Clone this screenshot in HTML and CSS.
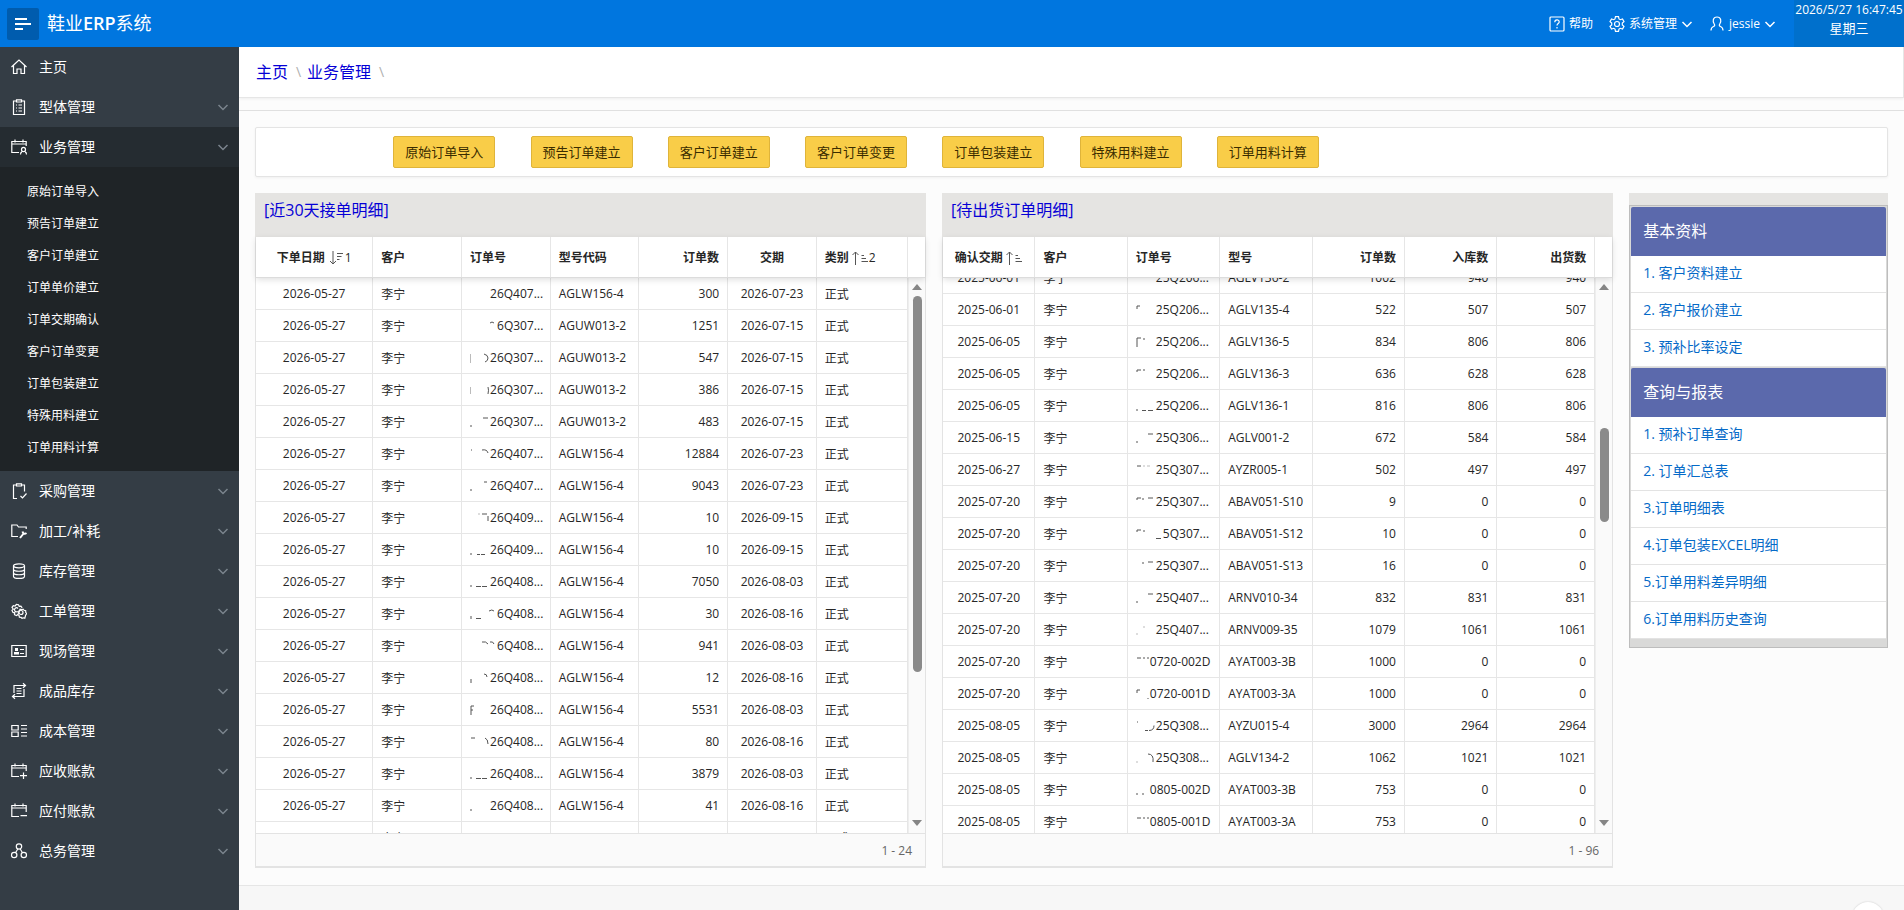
FILE: index.html
```html
<!DOCTYPE html>
<html lang="zh-CN">
<head>
<meta charset="utf-8">
<title>鞋业ERP系统</title>
<link rel="stylesheet" href="styles.css">
</head>
<body>
<svg class="defs" aria-hidden="true">
  <symbol id="chev" viewBox="0 0 12 12"><path d="M1.500 4l4.500 4.500L10.500 4"/></symbol>
  <symbol id="gear" viewBox="0 0 16 16"><circle cx="8" cy="8" r="2.500"/><path d="M6.500 .7h3l.5 2.200 1.300.8 2.200-.7 1.500 2.600-1.700 1.500v1.800l1.700 1.500-1.500 2.600-2.200-.7-1.300.8-.5 2.200h-3L6 13.100l-1.300-.8-2.200.7L1 10.400l1.700-1.500V7.100L1 5.600 2.500 3l2.200.7L6 2.900z"/></symbol>
  <symbol id="cogs" viewBox="0 0 16 16"><circle cx="10" cy="9.500" r="2"/><path d="M13.800 15.200l-1.600-.4-1.200.6-.9-1-1.700-.2-.3-1.600-1.200-1 .6-1.500-.5-1.600 1.300-.8.8-1.400 1.500.4 1.500-.6 1 1.200 1.600.5v1.600l1 1.200-1 1.300z"/><path d="M7 11.500l-1.500 1-2-.8.200-1.900-1.700-.4-1-2 1.300-1.300L1 4.300l1.300-1.600 1.800.3 1.200-1.500 2.200.2.700 1.600 1.700-.2 1.300 1.700"/><path d="M6.500 8.500a2 2 0 1 1 .5-3"/></symbol>
  <symbol id="desc" viewBox="0 0 14 16"><path d="M3.500 1v13M.5 11l3 3 3-3M7.500 3.500h6M7.500 6.500h4.500M7.500 9.500h2.500"/></symbol>
  <symbol id="asc" viewBox="0 0 17 16"><path d="M3.500 15V2M.5 5l3-3 3 3M9.500 5.500h2.500M9.500 8.500h4.500M9.500 11.500h6.500"/></symbol>
</svg>
<header class="topbar">
  <button class="burger" aria-label="导航"><svg width="16" height="14"><path d="M0 2h12M0 7h16M0 12h8"/></svg></button>
  <a class="brand" href="#">鞋业<b>ERP</b>系统</a>
  <nav class="tools">
    <a href="#"><svg class="ic" viewBox="0 0 16 16"><rect x="1" y="1" width="14" height="14" rx="1"/><path d="M5.800 6.200c0-3 4.400-3 4.400-.3C10.200 7.600 8 7.600 8 9.600M8 11v1.500"/></svg>帮助</a>
    <button><svg class="ic"><use href="#gear"/></svg>系统管理<svg class="chev"><use href="#chev"/></svg></button>
    <button><svg class="ic" viewBox="0 0 16 16"><path d="M8 1C3.500 1 3.800 5.500 5 7.500c1 1.700 1 2.500-.5 3C2.500 11.200 2 12 2 14.500M8 1c4.500 0 4.200 4.500 3 6.500-1 1.700-1 2.500.5 3 2 .7 2.500 1.500 2.500 4"/></svg>jessie<svg class="chev"><use href="#chev"/></svg></button>
  </nav>
  <div class="clock"><div>2026/5/27 16:47:45</div><div class="day">星期三</div></div>
</header>
<div class="shell">
<nav class="side">
  <a class="item" href="#"><svg class="ic" viewBox="0 0 16 16"><path d="M.5 8L8 1l7.500 7M2.500 6.500v8h3.500V10h4v4.500h3.500v-8"/></svg><span>主页</span></a>
  <a class="item" href="#"><svg class="ic" viewBox="0 0 16 16"><path d="M5.500 2H2.500v13.500h11V2h-3M5.500 .8h5V3h-5zM5 6h1M7.500 6H11M5 9h1M7.500 9H11M5 12h1M7.500 12H11"/></svg><span>型体管理</span><svg class="chev"><use href="#chev"/></svg></a>
  <a class="item current" href="#"><svg class="ic" viewBox="0 0 16 16"><path d="M8 13.500H.8v-11h14.400V7M.8 5h14.400M4 .5v3M12 .5v3M9.500 15.500c0-2 .8-2.500 1.500-2.700M14 12.800c1 .2 1.500 1 1.500 2.700M14.500 10.500a2 2.200 0 1 1-4 0 2 2.200 0 0 1 4 0"/></svg><span>业务管理</span><svg class="chev"><use href="#chev"/></svg></a>
  <div class="sub">
    <a href="#">原始订单导入</a><a href="#">预告订单建立</a><a href="#">客户订单建立</a><a href="#">订单单价建立</a><a href="#">订单交期确认</a><a href="#">客户订单变更</a><a href="#">订单包装建立</a><a href="#">特殊用料建立</a><a href="#">订单用料计算</a>
  </div>
  <a class="item" href="#"><svg class="ic" viewBox="0 0 16 16"><path d="M6 15.500H2.500V2h3M10.500 2h3v6.500M5.500 .8h5V3h-5zM9.500 13l2 2 4-4.500"/></svg><span>采购管理</span><svg class="chev"><use href="#chev"/></svg></a>
  <a class="item" href="#"><svg class="ic" viewBox="0 0 16 16"><path d="M7 13.500H.8V2H6l1.500 2h7.700v2"/><path class="thick" d="M9 15l4-5M11.500 8.500c.5 2 2 3 4 1.500"/></svg><span>加工/补耗</span><svg class="chev"><use href="#chev"/></svg></a>
  <a class="item" href="#"><svg class="ic" viewBox="0 0 16 16"><ellipse cx="8" cy="2.800" rx="5.500" ry="2"/><path d="M2.500 2.800v10.400c0 3 11 3 11 0V2.800M2.500 6.300c0 2.600 11 2.600 11 0M2.500 9.800c0 2.600 11 2.600 11 0"/></svg><span>库存管理</span><svg class="chev"><use href="#chev"/></svg></a>
  <a class="item" href="#"><svg class="ic"><use href="#cogs"/></svg><span>工单管理</span><svg class="chev"><use href="#chev"/></svg></a>
  <a class="item" href="#"><svg class="ic" viewBox="0 0 16 16"><path d="M.8 2.500h14.400v11H.8zM9 6.500h4M9 10.500h4"/><path class="fill" d="M4 5h3v3H4zM3 9h5v2.500H3z"/></svg><span>现场管理</span><svg class="chev"><use href="#chev"/></svg></a>
  <a class="item" href="#"><svg class="ic" viewBox="0 0 16 16"><path d="M3 10V2.500h11.500M12 .3l2.500 2.200L12 4.700M13 6v7.500H1.500M4 11.300l-2.500 2.200L4 15.700M5.500 5.500h5M5.500 8h5M5.500 10.500h5"/></svg><span>成品库存</span><svg class="chev"><use href="#chev"/></svg></a>
  <a class="item" href="#"><svg class="ic" viewBox="0 0 16 16"><path d="M.8 2.500h6.400v4.500H.8zM.8 9h6.400v4.500H.8zM10 2.500h6M10 6h6M10 9.500h6M10 13h6"/></svg><span>成本管理</span><svg class="chev"><use href="#chev"/></svg></a>
  <a class="item" href="#"><svg class="ic" viewBox="0 0 16 16"><path d="M8 13.500H.8v-11h14.400V8M.8 5h14.400M4 .5v3M12 .5v3M12.500 9.500v6.500M9 12.700h7"/></svg><span>应收账款</span><svg class="chev"><use href="#chev"/></svg></a>
  <a class="item" href="#"><svg class="ic" viewBox="0 0 16 16"><path d="M8 13.500H.8v-11h14.400V9M.8 5h14.400M4 .5v3M12 .5v3M9.500 12.700H16"/></svg><span>应付账款</span><svg class="chev"><use href="#chev"/></svg></a>
  <a class="item" href="#"><svg class="ic" viewBox="0 0 16 16"><circle cx="8" cy="3.500" r="2.700"/><circle cx="3.200" cy="12" r="2.700"/><circle cx="12.800" cy="12" r="2.700"/><path d="M6.800 6L4.500 9.700M9.200 6l2.300 3.700"/></svg><span>总务管理</span><svg class="chev"><use href="#chev"/></svg></a>
</nav>
<main>
  <div class="crumbs"><a href="#">主页</a><i>\</i><a href="#">业务管理</a><i>\</i></div>
  <div class="content">
    <section class="actions grid">
      <button>原始订单导入</button><button>预告订单建立</button><button>客户订单建立</button><button>客户订单变更</button><button>订单包装建立</button><button>特殊用料建立</button><button>订单用料计算</button>
    </section>
    <div class="grid">
    <section class="panel">
      <h2><a href="#">[近30天接单明细]</a></h2>
      <div class="head">
      <table class="t1"><colgroup><col class="w1"><col><col><col><col><col><col class="w7"></colgroup>
        <thead><tr><th class="c">下单日期<svg class="sort"><use href="#desc"/></svg><span>1</span></th><th>客户</th><th>订单号</th><th>型号代码</th><th class="r">订单数</th><th class="c">交期</th><th>类别<svg class="sort"><use href="#asc"/></svg><span>2</span></th></tr></thead>
      </table></div>
      <div class="view">
      <div class="rows"><table class="t1"><colgroup><col class="w1"><col><col><col><col><col><col class="w7"></colgroup>
        <tbody>
        <tr><td>2026-05-27<td>李宁<td><svg class="mk"></svg>26Q407...<td>AGLW156-4<td>300<td>2026-07-23<td>正式</tr>
        <tr><td>2026-05-27<td>李宁<td><svg class="mk wide"><path d="M20 3q2-2 4 0"/></svg>6Q307...<td>AGUW013-2<td>1251<td>2026-07-15<td>正式</tr>
        <tr><td>2026-05-27<td>李宁<td><svg class="mk"><path class="lt" d="M.5 2v9"/><path d="M14 2q4 1 4 4t-3 4"/></svg>26Q307...<td>AGUW013-2<td>547<td>2026-07-15<td>正式</tr>
        <tr><td>2026-05-27<td>李宁<td><svg class="mk"><path class="lt" d="M.5 3v7"/><path d="M18 3q1 3 0 7"/></svg>26Q307...<td>AGUW013-2<td>386<td>2026-07-15<td>正式</tr>
        <tr><td>2026-05-27<td>李宁<td><svg class="mk"><path d="M1 9v2M13 2h5"/></svg>26Q307...<td>AGUW013-2<td>483<td>2026-07-15<td>正式</tr>
        <tr><td>2026-05-27<td>李宁<td><svg class="mk"><path d="M1 2h1M12 2q5-1 6 3"/></svg>26Q407...<td>AGLW156-4<td>12884<td>2026-07-23<td>正式</tr>
        <tr><td>2026-05-27<td>李宁<td><svg class="mk"><path d="M1 9v2M14 2h3"/></svg>26Q407...<td>AGLW156-4<td>9043<td>2026-07-23<td>正式</tr>
        <tr><td>2026-05-27<td>李宁<td><svg class="mk"><path class="lt" d="M8 2h2"/><path d="M12 2h5M18 4v5"/></svg>26Q409...<td>AGLW156-4<td>10<td>2026-09-15<td>正式</tr>
        <tr><td>2026-05-27<td>李宁<td><svg class="mk"><path d="M1 9v2M7 10.500h3M11 10.500h4"/></svg>26Q409...<td>AGLW156-4<td>10<td>2026-09-15<td>正式</tr>
        <tr><td>2026-05-27<td>李宁<td><svg class="mk"><path d="M1 9v2M6 10.500h5M12 10.500h5"/></svg>26Q408...<td>AGLW156-4<td>7050<td>2026-08-03<td>正式</tr>
        <tr><td>2026-05-27<td>李宁<td><svg class="mk wide"><path d="M1 8v3M6 10.500h5M19 3q3-2 5 0"/></svg>6Q408...<td>AGLW156-4<td>30<td>2026-08-16<td>正式</tr>
        <tr><td>2026-05-27<td>李宁<td><svg class="mk wide"><path d="M12 2q4-1 6 2M20 2q3-1 4 2"/></svg>6Q408...<td>AGLW156-4<td>941<td>2026-08-03<td>正式</tr>
        <tr><td>2026-05-27<td>李宁<td><svg class="mk"><path d="M1 7v4M14 2q3 0 3 3"/></svg>26Q408...<td>AGLW156-4<td>12<td>2026-08-16<td>正式</tr>
        <tr><td>2026-05-27<td>李宁<td><svg class="mk"><path d="M1 11V2h3M1 6h2"/></svg>26Q408...<td>AGLW156-4<td>5531<td>2026-08-03<td>正式</tr>
        <tr><td>2026-05-27<td>李宁<td><svg class="mk"><path d="M1 2h4M15 2q3 1 3 6"/></svg>26Q408...<td>AGLW156-4<td>80<td>2026-08-16<td>正式</tr>
        <tr><td>2026-05-27<td>李宁<td><svg class="mk"><path d="M1 9v2M6 10.500h5M12 10.500h5"/></svg>26Q408...<td>AGLW156-4<td>3879<td>2026-08-03<td>正式</tr>
        <tr><td>2026-05-27<td>李宁<td><svg class="mk"><path d="M1 9v2"/></svg>26Q408...<td>AGLW156-4<td>41<td>2026-08-16<td>正式</tr>
        <tr><td>2026-05-27<td>李宁<td><svg class="mk"></svg>26Q408...<td>AGLW156-4<td>30<td>2026-08-03<td>正式</tr>
        </tbody>
      </table></div>
      <div class="bar"><b class="up"></b><div class="track"><span class="thumb first"></span></div><b class="down"></b></div>
      </div>
      <footer>1 - 24</footer>
    </section>
    <section class="panel">
      <h2><a href="#">[待出货订单明细]</a></h2>
      <div class="head">
      <table class="t2"><colgroup><col><col><col><col><col><col><col class="w7"></colgroup>
        <thead><tr><th class="c">确认交期<svg class="sort"><use href="#asc"/></svg></th><th>客户</th><th>订单号</th><th>型号</th><th class="r">订单数</th><th class="r">入库数</th><th class="r">出货数</th></tr></thead>
      </table></div>
      <div class="view">
      <div class="rows"><table class="t2 scrolled"><colgroup><col><col><col><col><col><col><col class="w7"></colgroup>
        <tbody>
        <tr><td>2025-06-01<td>李宁<td><svg class="mk"></svg>25Q206...<td>AGLV136-2<td>1002<td>940<td>940</tr>
        <tr><td>2025-06-01<td>李宁<td><svg class="mk"><path d="M1 5V2h3"/></svg>25Q206...<td>AGLV135-4<td>522<td>507<td>507</tr>
        <tr><td>2025-06-05<td>李宁<td><svg class="mk"><path d="M1 11V2h4M8 2v2"/></svg>25Q206...<td>AGLV136-5<td>834<td>806<td>806</tr>
        <tr><td>2025-06-05<td>李宁<td><svg class="mk"><path d="M1 4V2h4M7 2h2"/></svg>25Q206...<td>AGLV136-3<td>636<td>628<td>628</tr>
        <tr><td>2025-06-05<td>李宁<td><svg class="mk"><path d="M1 9v2M6 10.500h4M12 10.500h5"/></svg>25Q206...<td>AGLV136-1<td>816<td>806<td>806</tr>
        <tr><td>2025-06-15<td>李宁<td><svg class="mk"><path d="M1 9v2M12 2h5"/></svg>25Q306...<td>AGLV001-2<td>672<td>584<td>584</tr>
        <tr><td>2025-06-27<td>李宁<td><svg class="mk"><path d="M1 2h4"/><path class="lt" d="M7 2h2M11 2h3"/></svg>25Q307...<td>AYZR005-1<td>502<td>497<td>497</tr>
        <tr><td>2025-07-20<td>李宁<td><svg class="mk"><path d="M1 4V2h4M7 2v2M12 2h5"/></svg>25Q307...<td>ABAV051-S10<td>9<td>0<td>0</tr>
        <tr><td>2025-07-20<td>李宁<td><svg class="mk wide"><path d="M1 4V2h4M8 2v2M20 10.500h5"/></svg>5Q307...<td>ABAV051-S12<td>10<td>0<td>0</tr>
        <tr><td>2025-07-20<td>李宁<td><svg class="mk"><path d="M7 2v2M12 2h5"/></svg>25Q307...<td>ABAV051-S13<td>16<td>0<td>0</tr>
        <tr><td>2025-07-20<td>李宁<td><svg class="mk"><path d="M1 9v2M12 2h5"/></svg>25Q407...<td>ARNV010-34<td>832<td>831<td>831</tr>
        <tr><td>2025-07-20<td>李宁<td><svg class="mk"><path class="lt" d="M1 9v2M8 2v2"/></svg>25Q407...<td>ARNV009-35<td>1079<td>1061<td>1061</tr>
        <tr><td>2025-07-20<td>李宁<td><svg class="mk short"><path d="M1 2h4M7 2h2M11 2h2"/></svg>0720-002D<td>AYAT003-3B<td>1000<td>0<td>0</tr>
        <tr><td>2025-07-20<td>李宁<td><svg class="mk short"><path d="M1 5V2h3M12 10v1"/></svg>0720-001D<td>AYAT003-3A<td>1000<td>0<td>0</tr>
        <tr><td>2025-08-05<td>李宁<td><svg class="mk"><path d="M1 2h1M9 10.500h3M13 10.500q5 0 5-5"/></svg>25Q308...<td>AYZU015-4<td>3000<td>2964<td>2964</tr>
        <tr><td>2025-08-05<td>李宁<td><svg class="mk"><path class="lt" d="M1 9v2"/><path d="M12 2q6 0 5 8"/></svg>25Q308...<td>AGLV134-2<td>1062<td>1021<td>1021</tr>
        <tr><td>2025-08-05<td>李宁<td><svg class="mk short"><path d="M1 9v2M7 9v2"/></svg>0805-002D<td>AYAT003-3B<td>753<td>0<td>0</tr>
        <tr><td>2025-08-05<td>李宁<td><svg class="mk short"><path d="M1 2h4M7 2h2M11 2h2"/></svg>0805-001D<td>AYAT003-3A<td>753<td>0<td>0</tr>
        </tbody>
      </table></div>
      <div class="bar"><b class="up"></b><div class="track"><span class="thumb second"></span></div><b class="down"></b></div>
      </div>
      <footer>1 - 96</footer>
    </section>
    <aside class="links">
      <div class="strip"></div>
      <div class="box">
        <h3>基本资料</h3>
        <ul><li><a href="#">1. 客户资料建立</a></li><li><a href="#">2. 客户报价建立</a></li><li><a href="#">3. 预补比率设定</a></li></ul>
        <h3>查询与报表</h3>
        <ul><li><a href="#">1. 预补订单查询</a></li><li><a href="#">2. 订单汇总表</a></li><li><a href="#">3.订单明细表</a></li><li><a href="#">4.订单包装EXCEL明细</a></li><li><a href="#">5.订单用料差异明细</a></li><li><a href="#">6.订单用料历史查询</a></li></ul>
      </div>
    </aside>
    </div>
  </div>
  <div class="pagefoot"><button class="totop" aria-label="返回顶部"></button></div>
</main>
</div>
</body>
</html>
```
FILE: styles.css
```css
* { box-sizing: border-box; }
body {
  margin: 0;
  height: 100vh;
  overflow: hidden;
  display: flex;
  flex-direction: column;
  font-family: "Open Sans", "Noto Sans CJK SC", sans-serif;
  font-size: 12px;
  color: #262626;
  background: #fcfcfc;
}
a { text-decoration: none; color: inherit; }
button { font-family: inherit; cursor: pointer; }
svg { fill: none; stroke: currentColor; }
.defs { position: absolute; width: 0; height: 0; }
.ic { width: 16px; height: 16px; flex: none; overflow: visible; stroke-width: 1.2; }
.chev { width: 12px; height: 12px; flex: none; stroke-width: 1.5; }
.fill { fill: currentColor; stroke: none; }
.thick { stroke-width: 2; }

.topbar {
  flex: none;
  height: 47px;
  display: flex;
  align-items: center;
  background: #0076df;
  color: #fff;
}
.burger {
  width: 32px;
  height: 32px;
  margin-left: 7px;
  padding: 0;
  display: flex;
  align-items: center;
  justify-content: center;
  border: 0;
  border-radius: 2px;
  background: #005cae;
  color: #fff;
  stroke-width: 2;
}
.brand { margin-left: 8px; padding-bottom: 2px; font-size: 18px; line-height: 24px; }
.brand b { font-weight: 600; }
.tools { margin-left: auto; display: flex; gap: 16px; margin-right: 18px; }
.tools a, .tools button {
  display: flex;
  align-items: center;
  gap: 4px;
  padding: 0;
  border: 0;
  background: none;
  color: #fff;
  font-size: 12px;
  line-height: 16px;
}
.clock {
  width: 110px;
  height: 47px;
  background: #0070cc;
  text-align: center;
  line-height: 19px;
  white-space: nowrap;
}
.day { font-size: 13px; }

.shell { flex: 1; min-height: 0; display: flex; }
.side { width: 239px; flex: none; background: #343d45; color: #fff; overflow: hidden; }
.item { display: flex; align-items: center; height: 40px; padding: 0 10px 0 11px; font-size: 14px; line-height: 20px; }
.item span { flex: 1; margin-left: 12px; padding-bottom: 1px; }
.item .chev { color: #7b858d; }
.current { background: #252c31; }
.sub { padding: 9px 0 7px; background: #1f2427; }
.sub a { display: block; padding-left: 27px; line-height: 32px; }

main { flex: 1; min-width: 0; display: flex; flex-direction: column; }
.crumbs {
  height: 51px;
  flex: none;
  display: flex;
  align-items: center;
  padding: 0 0 2px 17px;
  background: #fff;
  border: solid #e6e6e6;
  border-width: 0 1px 1px 0;
  box-shadow: 0 1px 3px rgba(0, 0, 0, .06);
  font-size: 16px;
}
.crumbs a, .panel h2 a { color: #0500d6; }
.crumbs i { width: 19px; padding-left: 2px; text-align: center; font-style: normal; color: #b0b0b0; font-size: 14px; }
.content {
  flex: 1;
  margin-top: 12px;
  padding: 16px;
  border-top: 1px solid #e0e0e0;
}
.grid { display: grid; grid-template-columns: repeat(12, minmax(0, 1fr)); column-gap: 16px; align-items: start; }
.actions {
  padding: 8px 0;
  margin-bottom: 16px;
  height: 50px;
  background: #fff;
  border: 1px solid #e4e4e4;
  border-radius: 2px;
  box-shadow: 0 1px 3px rgba(0, 0, 0, .05);
}
.actions button {
  width: 102px;
  height: 32px;
  padding: 0 0 2px;
  border: 1px solid #dfb43a;
  border-radius: 2px;
  background: #f9cd48;
  color: #3a2c00;
  font-size: 13px;
}
.actions button:first-child { grid-column-start: 2; }

.panel { grid-column: span 5; border: 1px solid #e3e3e3; border-bottom-width: 2px; background: #fff; }
.panel h2 {
  margin: -1px -1px 0;
  height: 44px;
  padding: 7px 9px;
  background: #e5e4e2;
  font-size: 16px;
  line-height: 20px;
  font-weight: 400;
}
.head { height: 41px; padding-right: 17px; border-bottom: 1px solid #dcdcdc; box-shadow: 0 2px 6px rgba(0, 0, 0, .12); position: relative; }
table { width: 100%; table-layout: fixed; border-collapse: separate; border-spacing: 0; }
.t1 .w1 { width: 18%; }
.t1 .w7 { width: 14%; }
.t2 .w7 { width: 15%; }
th, td { padding: 0 8px; text-align: left; white-space: nowrap; overflow: hidden; border-right: 1px solid #e6e6e6; }
th { height: 40px; font-weight: 700; }
th span { font-weight: 400; }
td { height: 32px; border-bottom: 1px solid #e6e6e6; }
.c, td:first-child, .t1 td:nth-child(6) { text-align: center; }
.r, td:nth-child(5), .t2 td:nth-child(6), .t2 td:nth-child(7) { text-align: right; }
.sort { width: 17px; height: 16px; margin-left: 3px; vertical-align: middle; stroke: #555; }
th:first-child { padding: 0; }
.view { height: 555px; display: flex; overflow: hidden; }
.rows { flex: 1; min-width: 0; }
.scrolled { margin-top: -16px; }
.mk { width: 20px; height: 12px; vertical-align: text-bottom; stroke: #555; margin-bottom: 2px; }
.mk.wide { width: 27px; }
.mk.short { width: 14px; }
.mk .lt { stroke: #bbb; }
.bar { width: 17px; display: flex; flex-direction: column; align-items: center; padding: 6px 0 7px; background: #fafafa; border-left: 1px solid #eee; }
.up, .down { border: 5px solid transparent; }
.up { border-top: 0; border-bottom: 6px solid #858585; }
.down { border-bottom: 0; border-top: 6px solid #858585; }
.track { flex: 1; padding: 6px 0 4px; }
.thumb { display: block; width: 9px; border-radius: 5px; background: #8a8a8a; }
.first { height: 376px; }
.second { height: 94px; margin-top: 132px; }
.panel footer { height: 33px; padding-right: 13px; border-top: 1px solid #e3e3e3; background: #fafafa; color: #666; text-align: right; line-height: 34px; }

.links { grid-column: span 2; }
.strip { height: 12px; background: #e5e4e2; }
.box { padding: 1px 1px 8px; border: 1px solid #bdbdbd; background: #d9d9d8; }
.box h3 {
  margin: 0;
  height: 49px;
  padding-left: 12px;
  border-radius: 2px 2px 0 0;
  background: #5b69ac;
  color: #fff;
  font-size: 16px;
  line-height: 48px;
  font-weight: 400;
}
.box ul { margin: 0; padding: 0; list-style: none; background: #fff; }
.box ul + h3 { margin-top: 1px; }
.box li { height: 37px; border-bottom: 1px solid #e3e3e3; }
.box li a { display: block; padding-left: 12px; color: #056ac8; font-size: 14px; line-height: 34px; }
.pagefoot { flex: none; height: 25px; border-top: 1px solid #e6e6e6; background: #f7f7f7; position: relative; overflow: hidden; }
.totop {
  position: absolute;
  right: 20px;
  top: 16px;
  width: 32px;
  height: 32px;
  border: 0;
  border-radius: 50%;
  background: #fff;
  box-shadow: 0 0 2px rgba(0, 0, 0, .2);
}
```
